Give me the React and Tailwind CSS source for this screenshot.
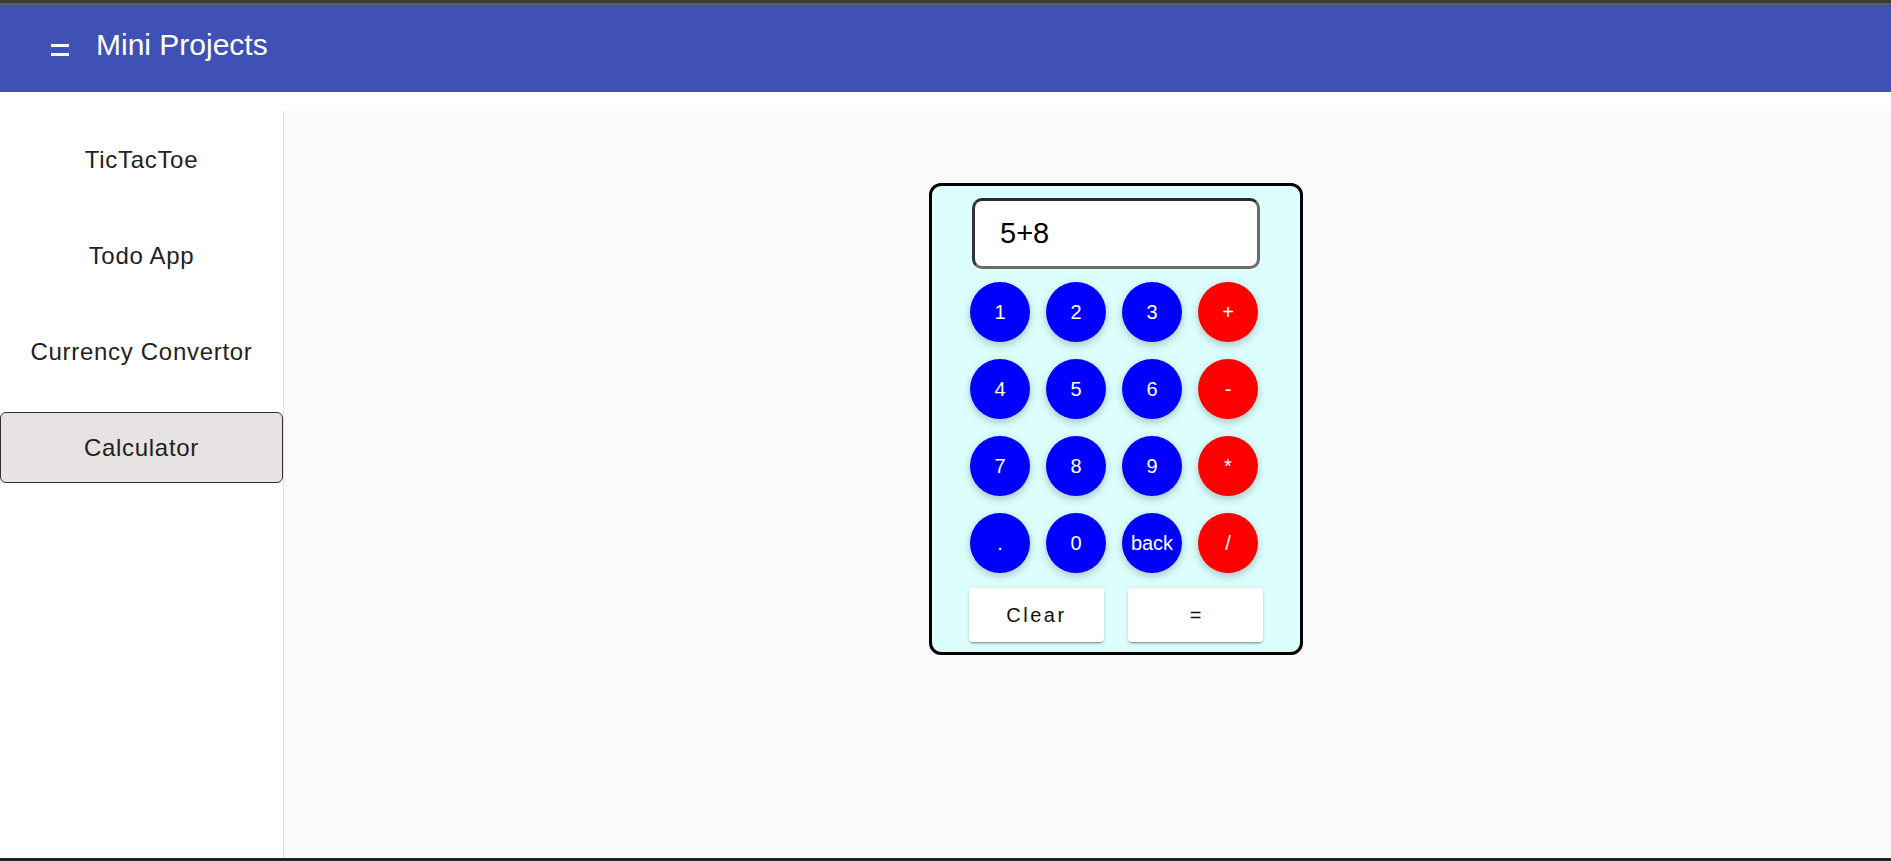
import React, { useState } from 'react';

const NAV = ['TicTacToe', 'Todo App', 'Currency Convertor', 'Calculator'];

const KEYS = [
  ['1', '2', '3', '+'],
  ['4', '5', '6', '-'],
  ['7', '8', '9', '*'],
  ['.', '0', 'back', '/'],
];

const isOp = (k) => ['+', '-', '*', '/'].includes(k);

function CircleKey({ label, onPress }) {
  return (
    <button
      type="button"
      onClick={() => onPress(label)}
      className={
        'w-[60px] h-[60px] rounded-full flex items-center justify-center text-white text-[20px] leading-none shadow-[0_3px_9px_rgba(0,0,0,0.24)] ' +
        (isOp(label) ? 'bg-[#ff0000]' : 'bg-[#0000ff]')
      }
    >
      {label}
    </button>
  );
}

function Calculator() {
  const [value, setValue] = useState('5+8');

  const press = (k) => {
    if (k === 'back') setValue((v) => v.slice(0, -1));
    else setValue((v) => v + k);
  };

  const evaluate = () => {
    try {
      // eslint-disable-next-line no-new-func
      setValue(String(Function(`return (${value})`)()));
    } catch {
      setValue('Error');
    }
  };

  return (
    <div className="w-[374px] h-[472px] border-[3px] border-black rounded-[12px] bg-[#dcfffe] flex flex-col items-center pt-[12px]">
      <div className="w-[288px] h-[71px] border-[3px] border-[#6a6a6a] border-t-[#2a2a2a] border-l-[#333] rounded-[10px] bg-white flex items-center pl-[25px] text-[29px] text-black">
        {value}
      </div>
      <div className="mt-[13px] grid grid-cols-4 gap-x-[16px] gap-y-[17px] mr-[4px]">
        {KEYS.flat().map((k) => (
          <CircleKey key={k} label={k} onPress={press} />
        ))}
      </div>
      <div className="mt-[15px] flex gap-[24px]">
        <button
          type="button"
          onClick={() => setValue('')}
          className="w-[135px] h-[54px] bg-white rounded-[4px] text-[20px] tracking-[2.5px] text-[#111] shadow-[0_3px_1px_-2px_rgba(0,0,0,0.2),0_2px_2px_0_rgba(0,0,0,0.14),0_1px_5px_0_rgba(0,0,0,0.12)]"
        >
          Clear
        </button>
        <button
          type="button"
          onClick={evaluate}
          className="w-[135px] h-[54px] bg-white rounded-[4px] text-[20px] text-[#111] shadow-[0_3px_1px_-2px_rgba(0,0,0,0.2),0_2px_2px_0_rgba(0,0,0,0.14),0_1px_5px_0_rgba(0,0,0,0.12)]"
        >
          =
        </button>
      </div>
    </div>
  );
}

export default function App() {
  const [active, setActive] = useState('Calculator');

  return (
    <div
      className="w-[1891px] h-[861px] flex flex-col bg-white overflow-hidden"
      style={{ fontFamily: '"Liberation Sans", Arial, sans-serif' }}
    >
      <div className="h-[3px] bg-[#3b3b3b]" />
      <div className="h-[2px] bg-[#5a5a5a]" />
      <header className="h-[87px] bg-[#3f51b5] flex items-center text-white shrink-0">
        <div className="ml-[51px] w-[18px] flex flex-col gap-[6px] mt-[3px]">
          <span className="block h-[3px] bg-white" />
          <span className="block h-[3px] bg-white" />
        </div>
        <h1 className="ml-[27px] text-[30px] leading-none mb-[8px]">Mini Projects</h1>
      </header>
      <div className="h-[19px] bg-white shrink-0" />
      <div className="flex flex-1 min-h-0">
        <nav className="w-[284px] shrink-0 bg-white border-r border-[#e0e0e0] flex flex-col gap-[25px] pt-[13px]">
          {NAV.map((item) => (
            <button
              key={item}
              type="button"
              onClick={() => setActive(item)}
              className={
                'w-[283px] h-[71px] rounded-[6px] text-[24px] tracking-[0.7px] text-[#222] flex items-center justify-center ' +
                (active === item ? 'bg-[#e8e3e3] border border-[#333]' : 'border border-transparent')
              }
            >
              {item}
            </button>
          ))}
        </nav>
        <main className="flex-1 bg-[#fafafa] pl-[645px] pt-[72px]">
          <Calculator />
        </main>
      </div>
      <div className="h-[3px] bg-[#232323] shrink-0" />
    </div>
  );
}
